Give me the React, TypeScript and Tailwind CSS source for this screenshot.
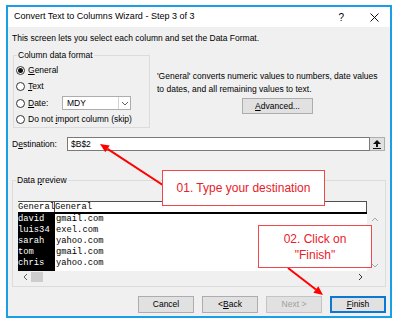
import React from 'react';

const Radio = ({ checked = false }: { checked?: boolean }) => (
  <span className="w-[9px] h-[9px] rounded-full border border-[#333] bg-white flex items-center justify-center shrink-0">
    {checked && <span className="w-[5px] h-[5px] rounded-full bg-[#111]" />}
  </span>
);

const Chevron = ({ dir, color = '#606060' }: { dir: 'up' | 'down' | 'left' | 'right'; color?: string }) => {
  const pts = {
    up: '1,4 4,1 7,4',
    down: '1,1 4,4 7,1',
    left: '4,1 1,4 4,7',
    right: '1,1 4,4 1,7',
  }[dir];
  const w = dir === 'up' || dir === 'down' ? 8 : 5;
  const h = dir === 'up' || dir === 'down' ? 5 : 8;
  return (
    <svg width={w} height={h} viewBox={`0 0 ${w} ${h}`}>
      <polyline points={pts} fill="none" stroke={color} strokeWidth="1" />
    </svg>
  );
};

const Btn = ({ children, variant = 'normal' }: { children: React.ReactNode; variant?: 'normal' | 'disabled' | 'default' }) => {
  const styles = {
    normal: 'border border-[#adadad] text-black',
    disabled: 'border border-[#c4c4c4] text-[#a0a0a0]',
    default: 'border-2 border-[#0a78d4] text-black',
  }[variant];
  return (
    <div className={`w-[56px] h-[17px] bg-[#e1e1e1] flex items-center justify-center ${styles}`}>{children}</div>
  );
};

const rows = [
  ['david', 'gmail.com'],
  ['luis34', 'exel.com'],
  ['sarah', 'yahoo.com'],
  ['tom', 'gmail.com'],
  ['chris', 'yahoo.com'],
];

export default function App() {
  return (
    <div className="relative w-[399px] h-[324px] bg-white overflow-hidden pt-[5px] pl-[6px] font-['Liberation_Sans',Arial,sans-serif]">
      {/* dialog window */}
      <div className="w-[386px] h-[313px] border-2 border-[#1a9fe6] flex flex-col">
        {/* title bar */}
        <div className="h-[20px] bg-white flex items-center pl-[6px] pr-[11px] text-[9px] text-black shrink-0">
          <span>Convert Text to Columns Wizard - Step 3 of 3</span>
          <span className="ml-auto text-[10px]">?</span>
          <svg className="ml-[26px]" width="9" height="9" viewBox="0 0 9 9">
            <path d="M0.5 0.5 L8.5 8.5 M8.5 0.5 L0.5 8.5" stroke="#111" strokeWidth="1" />
          </svg>
        </div>

        {/* body */}
        <div className="flex-1 bg-[#f0f0f0] px-[4px] pt-[6px] text-[8.5px] leading-[11px] text-black">
          <p>This screen lets you select each column and set the Data Format.</p>

          <div className="flex mt-[11px]">
            {/* column data format group */}
            <div className="relative ml-[1px] w-[137px] h-[73px] border border-[#dcdcdc] pt-[8px] pl-[2px] shrink-0">
              <span className="absolute -top-[6px] left-[3px] px-[1px] bg-[#f0f0f0]">Column data format</span>
              <div className="flex items-center h-[12px]">
                <Radio checked />
                <span className="ml-[3px]"><span className="underline">G</span>eneral</span>
              </div>
              <div className="flex items-center h-[12px] mt-[4px]">
                <Radio />
                <span className="ml-[3px]"><span className="underline">T</span>ext</span>
              </div>
              <div className="flex items-center h-[14px] mt-[4px]">
                <Radio />
                <span className="ml-[3px] w-[34px]"><span className="underline">D</span>ate:</span>
                <div className="w-[69px] h-[14px] bg-white border border-[#adadad] flex items-center">
                  <span className="pl-[4px] flex-1">MDY</span>
                  <div className="w-[12px] h-full border-l border-[#d4d4d4] flex items-center justify-center">
                    <Chevron dir="down" />
                  </div>
                </div>
              </div>
              <div className="flex items-center h-[12px] mt-[3px]">
                <Radio />
                <span className="ml-[3px]">Do not <span className="underline">i</span>mport column (skip)</span>
              </div>
            </div>

            {/* description */}
            <div className="ml-[7px] pt-[15px]">
              <p className="leading-[13px]">
                'General' converts numeric values to numbers, date values
                <br />
                to dates, and all remaining values to text.
              </p>
              <div className="mt-[2px] ml-[85px] w-[71px] h-[16px] bg-[#e1e1e1] border border-[#adadad] flex items-center justify-center">
                <span><span className="underline">A</span>dvanced...</span>
              </div>
            </div>
          </div>

          {/* destination */}
          <div className="flex items-center h-[14px] mt-[9px]">
            <span className="w-[55px]">D<span className="underline">e</span>stination:</span>
            <div className="w-[303px] h-[14px] bg-white border border-[#7a7a7a] flex items-center pl-[3px]">$B$2</div>
            <div className="w-[15px] h-[14px] bg-[#e1e1e1] border border-[#adadad] border-l-0 flex items-center justify-center">
              <svg width="8" height="9" viewBox="0 0 8 9">
                <polygon points="4,0 8,4 0,4" fill="#111" />
                <rect x="3" y="4" width="2" height="3" fill="#111" />
                <rect x="0" y="8" width="8" height="1" fill="#111" />
              </svg>
            </div>
          </div>

          {/* data preview group */}
          <div className="relative mt-[29px] w-[374px] h-[107px] border border-[#dcdcdc] pt-[20px] pl-[5px]">
            <span className="absolute -top-[6px] left-[3px] px-[1px] bg-[#f0f0f0]">Data <span className="underline">p</span>review</span>
            <div className="w-[364px] h-[81px] bg-white flex flex-col">
              <div className="flex flex-1">
                <div className="flex-1 flex flex-col font-['Liberation_Mono',monospace] text-[8.8px] leading-[11px]">
                  <div className="h-[11px] flex border-t border-r border-[#505050]">
                    <span className="w-[37px] border-r border-[#505050] leading-[10px] whitespace-nowrap">General</span>
                    <span className="leading-[10px]">General</span>
                  </div>
                  <div className="h-[2px] bg-black" />
                  <div className="flex">
                    <div className="w-[37px] bg-black text-white pb-[2px]">
                      {rows.map((r) => (
                        <div key={r[0]}>{r[0]}</div>
                      ))}
                    </div>
                    <div className="pl-[1px]">
                      {rows.map((r, i) => (
                        <div key={i}>{r[1]}</div>
                      ))}
                    </div>
                  </div>
                </div>
                <div className="w-[15px] bg-[#f0f0f0] flex flex-col items-center pt-[16px] pb-[3px] justify-between">
                  <Chevron dir="up" color="#a8a8a8" />
                  <Chevron dir="down" color="#a8a8a8" />
                </div>
              </div>
              <div className="h-[12px] bg-[#f0f0f0] flex items-center shrink-0">
                <div className="w-[12px] flex justify-center pl-[2px]">
                  <Chevron dir="left" />
                </div>
                <div className="w-[12px] h-[10px] bg-[#cdcdcd] ml-[1px]" />
                <div className="flex-1 flex justify-end pr-[19px]">
                  <Chevron dir="right" color="#333" />
                </div>
              </div>
            </div>
          </div>

          {/* buttons */}
          <div className="mt-[9px] flex justify-end gap-[8px]">
            <Btn>Cancel</Btn>
            <Btn>&lt; <span className="underline">B</span>ack</Btn>
            <Btn variant="disabled">Next &gt;</Btn>
            <Btn variant="default"><span className="underline">F</span>inish</Btn>
          </div>
        </div>
      </div>

      {/* annotation arrows */}
      <svg className="absolute inset-0 pointer-events-none" width="399" height="324" viewBox="0 0 399 324">
        <line x1="175" y1="193" x2="107.5" y2="148.9" stroke="#ff0000" strokeWidth="2" />
        <polygon points="100,144 105.3,152.3 109.7,145.6" fill="#ff0000" />
        <line x1="288" y1="268" x2="315.9" y2="289.5" stroke="#ff0000" strokeWidth="2" />
        <polygon points="323,295 318.3,286.3 313.4,292.7" fill="#ff0000" />
      </svg>

      {/* callouts */}
      <div className="absolute left-[162px] top-[170px] w-[163px] h-[36px] bg-white border border-[#f0484a] flex items-center justify-center text-[12px] text-[#e8202a]">
        01. Type your destination
      </div>
      <div className="absolute left-[258px] top-[225px] w-[114px] h-[43px] bg-white border border-[#f0484a] flex flex-col items-center justify-center text-[12px] leading-[16px] text-[#e8202a]">
        <span>02. Click on</span>
        <span>"Finish"</span>
      </div>
    </div>
  );
}
